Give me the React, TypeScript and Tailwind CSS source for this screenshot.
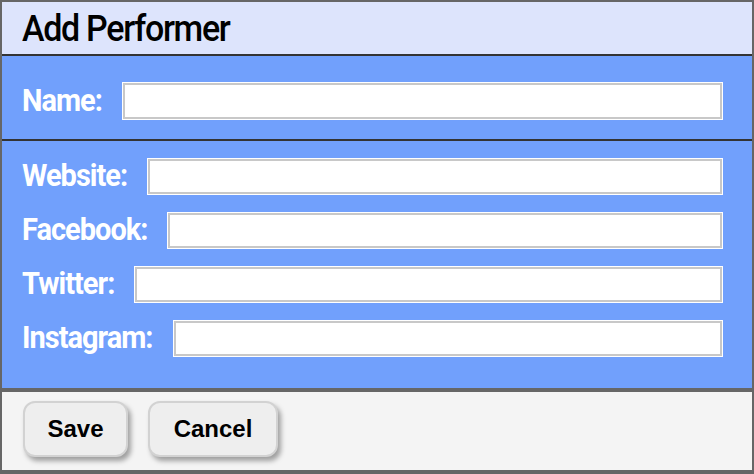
import React from 'react';

const labelCls = "flex-none text-white font-bold text-[29px] tracking-[-1px] leading-none scale-y-[1.06] mb-[2px]";
const inputCls = "flex-1 min-w-0 bg-white border border-white shadow-[inset_0_0_0_2px_#c8c8c8] outline-none";

function Field({ label, tall }: { label: string; tall?: boolean }) {
  return (
    <div className="flex items-center gap-[20px]">
      <label className={labelCls}>{label}</label>
      <input type="text" className={`${inputCls} ${tall ? "h-[38px]" : "h-[37px]"}`} />
    </div>
  );
}

export default function App() {
  return (
    <div
      className="w-[754px] h-[474px] flex flex-col border-2 border-b-4 border-[#666] bg-[#f4f4f4] overflow-hidden"
      style={{ fontFamily: "Roboto, 'Noto Sans', sans-serif" }}
    >
      {/* Header */}
      <div className="h-[54px] flex-none flex items-center pl-[20px] bg-[#dde4fc] border-b-2 border-[#333]">
        <h1 className="text-black font-medium text-[34px] tracking-[-1.3px] leading-none scale-y-[1.07] origin-left">Add Performer</h1>
      </div>

      {/* Name */}
      <div className="h-[85px] flex-none flex flex-col justify-center pt-[7px] pl-[20px] pr-[29px] bg-[#71a0fc] border-b-2 border-[#333]">
        <Field label="Name:" tall />
      </div>

      {/* Links */}
      <div className="flex-none h-[251px] flex flex-col gap-[17px] pt-[17px] pl-[20px] pr-[29px] bg-[#71a0fc] border-b-4 border-[#666]">
        <Field label="Website:" />
        <Field label="Facebook:" />
        <Field label="Twitter:" />
        <Field label="Instagram:" />
      </div>

      {/* Footer */}
      <div className="flex-1 flex items-start gap-[20px] pt-[9px] pl-[21px]" style={{ fontFamily: "'Liberation Sans', Arial, sans-serif" }}>
        <button className="w-[105px] h-[56px] rounded-[12px] bg-[#eeeeee] border-2 border-[#d2d2d2] shadow-[3px_4px_5px_rgba(0,0,0,0.35)] text-black font-bold text-[24px]">
          Save
        </button>
        <button className="w-[130px] h-[56px] rounded-[12px] bg-[#eeeeee] border-2 border-[#d2d2d2] shadow-[3px_4px_5px_rgba(0,0,0,0.35)] text-black font-bold text-[24px]">
          Cancel
        </button>
      </div>
    </div>
  );
}
